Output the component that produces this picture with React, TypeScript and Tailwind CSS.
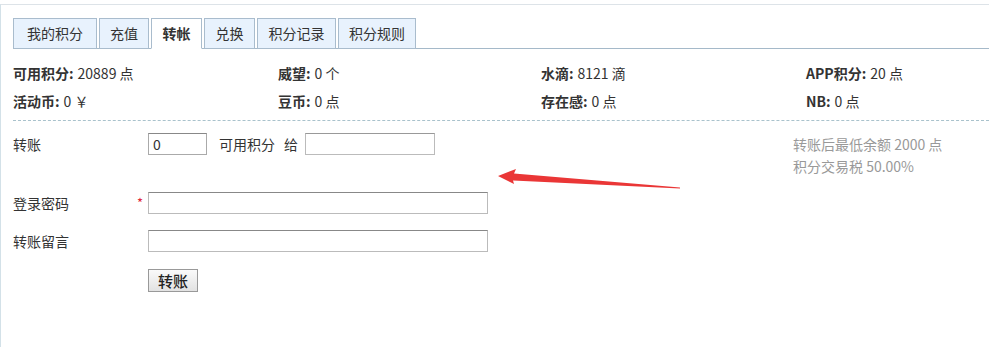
const font = { fontFamily: '"Noto Sans CJK SC", "Noto Sans", sans-serif' };

const tabs = ["我的积分", "充值", "转帐", "兑换", "积分记录", "积分规则"];
const tabWidths = ["w-[84px]", "w-[50px]", "w-[51px]", "w-[51px]", "w-[79px]", "w-[78px]"];

const stats = [
  ["可用积分", "20889 点"],
  ["威望", "0 个"],
  ["水滴", "8121 滴"],
  ["APP积分", "20 点"],
  ["活动币", "0 ￥"],
  ["豆币", "0 点"],
  ["存在感", "0 点"],
  ["NB", "0 点"],
];

export default function App() {
  return (
    <div
      className="relative w-[989px] h-[347px] bg-white pt-[4px] text-[14px] text-[#333] overflow-hidden"
      style={font}
    >
      <div className="h-full border-t border-l border-t-[#dde3e8] border-l-[#d3e1e8] pl-[12px] pt-[13px]">
        {/* tabs */}
        <div className="flex items-end gap-[2px] h-[31px] border-b border-[#a5b9c9]">
          {tabs.map((t, i) => (
            <div
              key={t}
              className={`${tabWidths[i]} h-[31px] flex items-center justify-center border border-[#a9bccd] -mb-px ${
                i === 2 ? "bg-white border-b-white font-bold" : "bg-[#e8f2fd]"
              }`}
            >
              {t}
            </div>
          ))}
        </div>

        {/* stats */}
        <div className="grid grid-cols-[265px_263px_265px_1fr] pt-[10px] pb-[5px] border-b border-dashed border-[#a9c2cc]">
          {stats.map(([k, v]) => (
            <div key={k} className="h-[28px] flex items-center whitespace-nowrap">
              <span className="font-bold">{k}:</span>
              <span className="ml-[4px]">{v}</span>
            </div>
          ))}
        </div>

        {/* form */}
        <div className="flex pt-[12px]">
          <div className="w-[780px] flex flex-col">
            <div className="flex items-center h-[22px]">
              <div className="w-[135px]">转账</div>
              <input
                defaultValue="0"
                className="w-[59px] h-[22px] border border-[#aaa] border-t-[#888] px-[4px] text-[14px] outline-none"
                style={font}
              />
              <span className="ml-[12px]">可用积分</span>
              <span className="ml-[9px]">给</span>
              <input className="ml-[7px] w-[130px] h-[22px] border border-[#bbb] border-t-[#999] outline-none" />
            </div>
            <div className="flex items-center h-[22px] mt-[37px]">
              <div className="w-[124px]">登录密码</div>
              <span className="w-[11px] text-[#e0263a] text-[13px]">*</span>
              <input className="w-[340px] h-[22px] border border-[#bbb] border-t-[#888] outline-none" />
            </div>
            <div className="flex items-center h-[22px] mt-[16px]">
              <div className="w-[135px]">转账留言</div>
              <input className="w-[340px] h-[22px] border border-[#bbb] border-t-[#888] outline-none" />
            </div>
            <div className="flex mt-[17px] pl-[135px]">
              <button
                className="w-[50px] h-[23px] border border-[#999] bg-gradient-to-b from-[#fafafa] to-[#e2e2e2] text-[15px] font-medium text-[#222] leading-none"
                style={font}
              >
                转账
              </button>
            </div>
          </div>
          <div className="flex flex-col text-[#999] leading-[22px]">
            <div>转账后最低余额 2000 点</div>
            <div>积分交易税 50.00%</div>
          </div>
        </div>
      </div>

      {/* annotation arrow */}
      <svg className="absolute left-0 top-0 pointer-events-none" width="989" height="347">
        <polygon
          points="498,176 516,169 514,173.5 680,187.5 680,188.5 513,180.5 514,184"
          fill="#ea3636"
        />
      </svg>
    </div>
  );
}
